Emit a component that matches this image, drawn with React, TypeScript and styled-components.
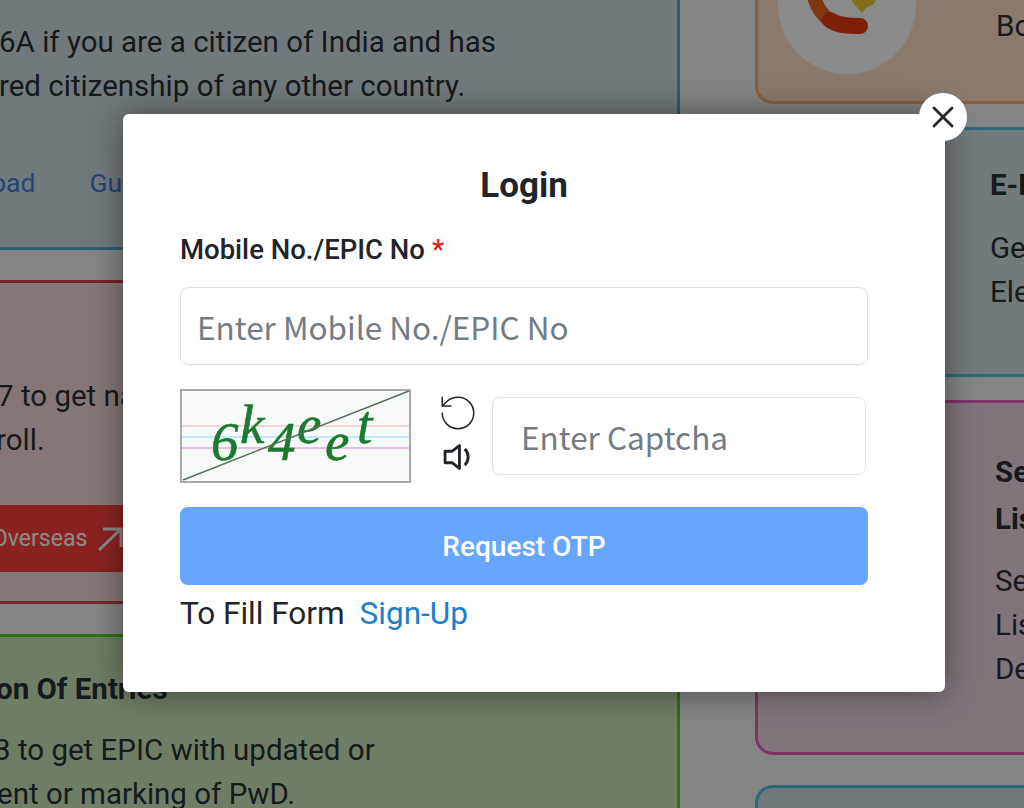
import React from 'react';
import styled, { createGlobalStyle } from 'styled-components';
import { RotateCcw, X } from 'lucide-react';
import { BsVolumeDown } from 'react-icons/bs';

const GlobalStyle = createGlobalStyle`
  html, body { margin:0; padding:0; background:#fff; }
  * { box-sizing:border-box; }
  body { font-family:Roboto, "Liberation Sans", sans-serif; color:#2b3034; }
`;

const Viewport = styled.div`
  position:relative;
  width:1024px;
  height:808px;
  overflow:hidden;
  background:#f4f5f6;
`;

const Scene = styled.div`
  display:flex;
  align-items:flex-start;
`;

const LeftColumn = styled.div`
  display:flex;
  flex-direction:column;
  gap:30px;
  width:700px;
  margin-left:-20px;
  flex:none;
`;

const RightColumn = styled.div`
  display:flex;
  flex-direction:column;
  gap:23px;
  width:400px;
  margin-left:75px;
  flex:none;
`;

const LeftCard = styled.section<{ $bg: string; $line: string; $top?: number; $height: number }>`
  height:${p => p.$height}px;
  margin-top:${p => p.$top ?? 0}px;
  padding:0 0 0 20px;
  background:${p => p.$bg};
  border:3px solid ${p => p.$line};
  border-radius:10px;
`;

const RightCard = styled.section<{ $bg: string; $line: string; $top?: number; $height: number; $pad: number; $left?: number }>`
  height:${p => p.$height}px;
  margin-top:${p => p.$top ?? 0}px;
  padding:${p => p.$pad}px 0 0 ${p => p.$left ?? 0}px;
  background:${p => p.$bg};
  border:3px solid ${p => p.$line};
  border-radius:18px;
`;

const Line = styled.p<{ $shift?: number; $gap?: number }>`
  margin:${p => p.$gap ?? 0}px 0 0 ${p => p.$shift ?? 0}px;
  font-size:29.5px;
  line-height:44px;
  white-space:nowrap;
`;

const Heading = styled(Line)`
  font-weight:700;
`;

const LinkRow = styled.div`
  display:flex;
  gap:54px;
  margin:53px 0 0 -12px;
`;

const BackLink = styled.span`
  font-size:26.5px;
  line-height:44px;
  color:#3f7fd8;
`;

const OverseasButton = styled.div`
  display:flex;
  align-items:center;
  gap:10px;
  width:220px;
  height:67px;
  margin:43px 0 0 -23px;
  padding-left:12px;
  background:#ff3f3f;
  border-radius:8px;
  color:#fff;
  font-size:23px;
  white-space:nowrap;
`;

const HelpRow = styled.div`
  display:flex;
  align-items:flex-start;
`;

const HelpCircle = styled.div`
  flex:none;
  width:138px;
  height:138px;
  margin-left:20px;
  border-radius:50%;
  background:#fff;
`;

const HelpText = styled(Line)`
  margin:68px 0 0 80px;
`;

const Overlay = styled.div`
  position:absolute;
  inset:0;
  padding:114px 0 0 123px;
  background:rgba(0,0,0,.46);
`;

const Modal = styled.div`
  position:relative;
  width:822px;
  height:578px;
  padding:51px 77px 0 57px;
  background:#fff;
  border-radius:6px;
  box-shadow:0 0 32px rgba(0,0,0,.45);
`;

const CloseButton = styled.button`
  position:absolute;
  top:-21px;
  right:-22px;
  display:flex;
  align-items:center;
  justify-content:center;
  width:48px;
  height:48px;
  padding:0;
  border:none;
  border-radius:50%;
  background:#fff;
  color:#26282b;
`;

const Title = styled.h2`
  margin:0;
  font-size:35px;
  line-height:42px;
  font-weight:700;
  text-align:center;
  color:#212529;
`;

const Label = styled.label`
  display:block;
  margin-top:24px;
  font-size:27.5px;
  line-height:38px;
  font-weight:500;
  color:#212529;
`;

const Required = styled.span`
  margin-left:7px;
  color:#e02020;
`;

const TextInput = styled.input<{ $pad: number; $size: number }>`
  display:block;
  width:100%;
  height:78px;
  padding:0 ${p => p.$pad}px;
  border:1.5px solid #dee2e6;
  border-radius:8px;
  outline:none;
  background:#fff;
  font-family:"Noto Sans CJK SC", "Noto Sans", sans-serif;
  font-size:${p => p.$size}px;
  color:#212529;
  &::placeholder { color:#737c84; opacity:1; }
`;

const MobileField = styled.div`
  margin-top:18px;
`;

const CaptchaRow = styled.div`
  display:flex;
  align-items:center;
  margin-top:24px;
`;

const CaptchaImage = styled.svg`
  display:block;
  flex:none;
  width:231px;
  height:94px;
`;

const CaptchaTools = styled.div`
  display:flex;
  flex-direction:column;
  align-items:center;
  flex:none;
  width:81px;
  padding-left:13px;
  color:#212529;
`;

const CaptchaField = styled.div`
  width:374px;
  flex:none;
`;

const SubmitButton = styled.button`
  display:block;
  width:100%;
  height:78px;
  margin-top:24px;
  border:none;
  border-radius:8px;
  background:#66a6ff;
  color:#fff;
  font-family:Roboto, sans-serif;
  font-size:28px;
  font-weight:500;
`;

const SignupRow = styled.div`
  display:flex;
  gap:15px;
  margin-top:9px;
  font-size:31.5px;
  line-height:40px;
  color:#212529;
`;

const SignupLink = styled.a`
  color:#1a7fd0;
`;

const OutArrow = () => (
  <svg width="26" height="24" viewBox="0 0 26 24" fill="none" stroke="#fff" strokeWidth="3" aria-hidden="true">
    <path d="M2 23 L24 2 M6 2 H24 V20" />
  </svg>
);

const PhoneArt = () => (
  <svg width="138" height="138" viewBox="0 0 138 138" aria-hidden="true">
    <path d="M70 60 L100 60 L96 68 L88 72 L84 77 L76 68 Z" fill="#f0cc30" />
    <path d="M34 50 C36 68 44 80 54 86" fill="none" stroke="#f0641e" strokeWidth="14" />
    <path d="M52 84 C60 90 72 90 82 90" fill="none" stroke="#e63a0a" strokeWidth="16" strokeLinecap="round" />
  </svg>
);

const Captcha = () => (
  <CaptchaImage viewBox="0 0 231 94" aria-label="captcha">
    <rect x="1" y="1" width="229" height="92" fill="#f8fafa" stroke="#a8aca8" strokeWidth="2" />
    <line x1="2" y1="37" x2="229" y2="37" stroke="#f4c8c8" strokeWidth="1.5" />
    <line x1="2" y1="48" x2="229" y2="48" stroke="#b0e0f4" strokeWidth="1.5" />
    <line x1="2" y1="59" x2="229" y2="59" stroke="#e4a8dc" strokeWidth="1.5" />
    <g fill="#1c7a30" stroke="#1c7a30" strokeWidth="0.6" fontFamily="'Liberation Serif', serif" fontStyle="italic" fontSize="55">
      <text x="31" y="71">6</text>
      <text x="60" y="54">k</text>
      <text x="88" y="71">4</text>
      <text x="117" y="54">e</text>
      <text x="145" y="71">e</text>
      <text x="177" y="54">t</text>
    </g>
    <line x1="3" y1="91" x2="229" y2="2" stroke="#55705a" strokeWidth="1.5" />
  </CaptchaImage>
);

const App = () => {
  return (
    <Viewport>
      <GlobalStyle />
      <Scene>
        <LeftColumn>
          <LeftCard $bg="#d3e0e6" $line="#50b0d0" $top={-20} $height={270}>
            <Line $shift={-4} $gap={37}>6A if you are a citizen of India and has</Line>
            <Line $shift={-4}>red citizenship of any other country.</Line>
            <LinkRow>
              <BackLink>oad</BackLink>
              <BackLink>Guidelines</BackLink>
            </LinkRow>
          </LeftCard>
          <LeftCard $bg="#f6dcdc" $line="#d84850" $height={324}>
            <Line $shift={-6} $gap={91}>7 to get name</Line>
            <Line $shift={-7}>roll.</Line>
            <OverseasButton>
              Overseas
              <OutArrow />
            </OverseasButton>
          </LeftCard>
          <LeftCard $bg="#cde8bd" $line="#5ccc1c" $height={240}>
            <Heading $shift={-7} $gap={30}>on Of Entries</Heading>
            <Line $shift={-9} $gap={17}>3 to get EPIC with updated or</Line>
            <Line $shift={-6}>ent or marking of PwD.</Line>
          </LeftCard>
        </LeftColumn>
        <RightColumn>
          <RightCard $bg="#ffe2cc" $line="#ffb070" $top={-100} $height={204} $pad={33}>
            <HelpRow>
              <HelpCircle>
                <PhoneArt />
              </HelpCircle>
              <HelpText>Book</HelpText>
            </HelpRow>
          </RightCard>
          <RightCard $bg="#d4e2e6" $line="#58c0e0" $height={250} $pad={33} $left={232}>
            <Heading>E-EPIC</Heading>
            <Line $gap={19}>Get</Line>
            <Line>Electoral</Line>
          </RightCard>
          <RightCard $bg="#eed8e6" $line="#e860c0" $height={355} $pad={47} $left={237}>
            <Heading>Search</Heading>
            <Heading $gap={3}>List</Heading>
            <Line $gap={18}>Search</Line>
            <Line>List</Line>
            <Line>Details</Line>
          </RightCard>
          <RightCard $bg="#cfdfe4" $line="#58c0e0" $top={7} $height={80} $pad={0} />
        </RightColumn>
      </Scene>
      <Overlay>
        <Modal>
          <CloseButton aria-label="Close">
            <X size={36} strokeWidth={1.9} />
          </CloseButton>
          <Title>Login</Title>
          <Label>
            Mobile No./EPIC No<Required>*</Required>
          </Label>
          <MobileField>
            <TextInput $pad={16} $size={31.5} placeholder="Enter Mobile No./EPIC No" />
          </MobileField>
          <CaptchaRow>
            <Captcha />
            <CaptchaTools>
              <RotateCcw size={42} strokeWidth={0.85} />
              <BsVolumeDown size={46} />
            </CaptchaTools>
            <CaptchaField>
              <TextInput $pad={28} $size={31.5} placeholder="Enter Captcha" />
            </CaptchaField>
          </CaptchaRow>
          <SubmitButton>Request OTP</SubmitButton>
          <SignupRow>
            To Fill Form
            <SignupLink>Sign-Up</SignupLink>
          </SignupRow>
        </Modal>
      </Overlay>
    </Viewport>
  );
};

export default App;
